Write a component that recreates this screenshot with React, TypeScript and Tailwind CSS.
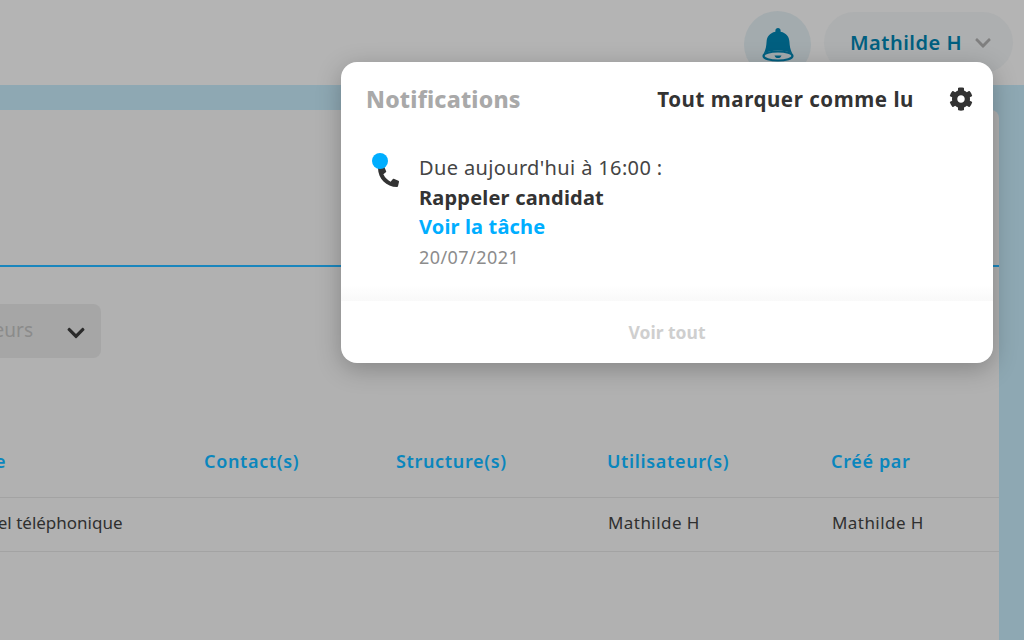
import { FaChevronDown, FaCog, FaPhoneAlt } from 'react-icons/fa';

const FONT = "font-['Noto_Sans','Lato',sans-serif]";

// ---- Data ----
const columns = [
  { label: 'Type', value: 'Appel téléphonique', width: 'w-[246px]', labelPad: 'pl-[4px]', valuePad: 'pl-[8px] tracking-normal' },
  { label: 'Contact(s)', value: '', width: 'w-[192px]', labelPad: '', valuePad: '' },
  { label: 'Structure(s)', value: '', width: 'w-[211px]', labelPad: '', valuePad: '' },
  { label: 'Utilisateur(s)', value: 'Mathilde H', width: 'w-[224px]', labelPad: '', valuePad: 'pl-[1px] tracking-[0.44px]' },
  { label: 'Créé par', value: 'Mathilde H', width: 'w-[168px]', labelPad: '', valuePad: 'pl-[1px] tracking-[0.44px]' },
];

function BellIcon() {
  return (
    <svg viewBox="0 0 32 36" className="w-[32px] h-[36px]" fill="#005f80">
      <path d="M16 1c-1.500 0-2.600 1.100-2.600 2.500v1.300C7.500 6 4.800 10.300 4.600 14.500c-.3 4.700-.8 8-2.800 12 3.500-2 8.800-3 14.200-3s10.700 1 14.200 3c-2-4-2.500-7.300-2.800-12C27.200 10.300 24.500 6 18.600 4.800V3.500C18.600 2.100 17.500 1 16 1z" />
      <ellipse cx="16" cy="29" rx="14.500" ry="4.500" fill="none" stroke="#005f80" strokeWidth="2.200" />
      <path d="M12.500 28.500h7c-.4 1.700-1.800 2.600-3.500 2.600s-3.100-.9-3.500-2.600z" />
    </svg>
  );
}

// ---- Page behind the overlay ----
function Header() {
  return (
    <header className="h-[85px] shrink-0 bg-[#b4b4b4] flex items-start justify-end pt-[11px] pr-[11px] gap-[13px]">
      <div className="w-[67px] h-[67px] rounded-full bg-[#a3abae] flex items-center justify-center">
        <BellIcon />
      </div>
      <div className="w-[189px] h-[61px] mt-[1px] rounded-full bg-[#adafb0] flex items-center pl-[26px] gap-[12px]">
        <span className="text-[20px] tracking-[0.5px] font-semibold text-[#005f80] leading-none">Mathilde H</span>
        <FaChevronDown className="w-[18px] h-[18px] text-[#7f7f7f]" />
      </div>
    </header>
  );
}

function TaskTable() {
  return (
    <div className="-ml-[42px] mt-[68px]">
      <div className="flex h-[72px] items-center border-b border-[#a3a3a3]">
        {columns.map(col => (
          <div key={col.label} className={`${col.width} ${col.labelPad} shrink-0 text-[18px] tracking-[0.65px] font-semibold text-[#0a86bd]`}>
            {col.label}
          </div>
        ))}
      </div>
      <div className="flex h-[54px] items-center border-b border-[#a3a3a3]">
        {columns.map(col => (
          <div key={col.label} className={`${col.width} ${col.valuePad} shrink-0 text-[17px] text-[#2f2f2f] -mt-[3px]`}>
            {col.value}
          </div>
        ))}
      </div>
    </div>
  );
}

function Background() {
  return (
    <div className="h-[640px] flex flex-col bg-[#8ea8b3]">
      <Header />
      <main className="mt-[25px] flex-1 w-[999px] bg-[#b1b1b1] rounded-tr-lg overflow-hidden">
        <div className="h-[157px] border-b-2 border-[#1a86bd]" />
        <div className="mt-[37px] h-[54px] w-[101px] rounded-r-lg bg-[#a6a6a6] flex items-center justify-between pr-[15px]">
          <span className="text-[19px] text-[#8b8b8b] w-[33px] overflow-hidden flex justify-end -mt-[2px]">eurs</span>
          <FaChevronDown className="w-[20px] h-[20px] mt-[4px] text-[#2b2b2b]" />
        </div>
        <TaskTable />
      </main>
    </div>
  );
}

// ---- Notifications popup ----
function NotificationPopup() {
  return (
    <div className="absolute left-[341px] top-[62px] w-[652px] h-[301px] bg-white rounded-[16px] shadow-[0_6px_24px_rgba(0,0,0,0.25)] flex flex-col">
      <div className="flex items-center h-[74px] pl-[25px] pr-[20px]">
        <span className="text-[23px] tracking-[0.2px] font-extrabold text-[#a9a9a9]">Notifications</span>
        <span className="ml-auto text-[20.500px] tracking-[0.55px] font-bold text-[#333333]">Tout marquer comme lu</span>
        <FaCog className="ml-[35px] w-[24px] h-[24px] text-[#333333]" />
      </div>

      <div className="flex flex-1 pl-[31px] pt-[17px]">
        <div className="relative w-[47px] h-[40px]">
          <FaPhoneAlt className="absolute left-[6px] top-[13px] w-[21px] h-[21px] text-[#333333]" />
          <span className="absolute left-0 top-0 w-[16px] h-[16px] rounded-full bg-[#00aeff]" />
        </div>
        <div className="flex flex-col text-[20px] leading-[29.500px]">
          <span className="tracking-[0.36px] text-[#444444]">Due aujourd'hui à 16:00 :</span>
          <span className="tracking-[0.2px] font-bold text-[#333333]">Rappeler candidat</span>
          <span className="tracking-[0.15px] font-bold text-[#00aeff]">Voir la tâche</span>
          <span className="mt-[1px] text-[18px] tracking-[0.44px] text-[#8c8c8c]">20/07/2021</span>
        </div>
      </div>

      {/* fade above the footer */}
      <div className="h-[16px] shrink-0 bg-gradient-to-b from-white to-[#f9f9f9]" />

      <div className="h-[62px] shrink-0 flex items-center justify-center text-[17.500px] font-bold text-[#cfcfcf]">
        Voir tout
      </div>
    </div>
  );
}

export default function App() {
  return (
    <div className={`relative w-[1024px] h-[640px] overflow-hidden ${FONT}`}>
      <Background />
      <NotificationPopup />
    </div>
  );
}
